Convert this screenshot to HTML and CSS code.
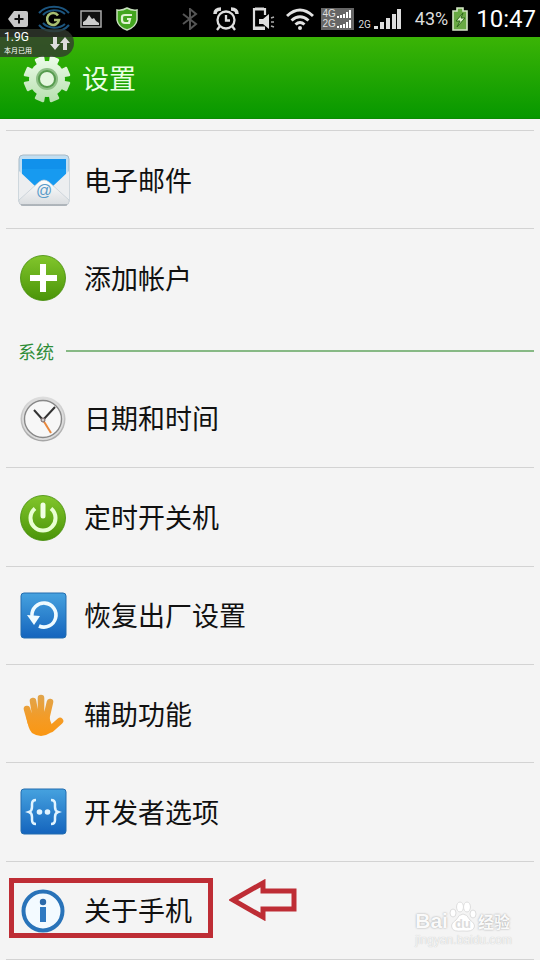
FILE: index.html
```html
<!DOCTYPE html>
<html lang="zh-CN">
<head>
    <meta charset="UTF-8">
    <meta name="viewport" content="width=device-width, initial-scale=1">
    <title>设置</title>
    <link rel="stylesheet" href="styles.css">
</head>
<body>
    <div class="status">
        <div class="left">
            <svg width="20" height="16" viewBox="0 0 20 16"><path d="M6 0h12q2 0 2 2v12q0 2-2 2H6L0 8z" fill="#c8c8c8"/><path d="M11 3.500v9M6.500 8h9" stroke="#111" stroke-width="2"/></svg>
            <svg class="ring" width="34" height="32" viewBox="0 0 34 32">
                <path d="M2 10A18 14 0 0 1 32 10M6 12A14 11 0 0 1 28 11M2 22A18 14 0 0 0 32 22M6 20A14 11 0 0 0 28 21" fill="none" stroke="#1c557f" stroke-width="2"/>
                <path d="M21 12.500a6 6 0 1 0 1 4.500h-5" fill="none" stroke="#a8bf72" stroke-width="2.600"/>
            </svg>
            <svg class="pic" width="22" height="18" viewBox="0 0 22 18"><rect x="1" y="1" width="20" height="16" fill="#111" stroke="#aaa" stroke-width="1.500"/><path d="M3 15v-3l3-2 3-5 3 4 2-1 2 3 3 2v2z" fill="#ccc"/></svg>
            <svg width="22" height="24" viewBox="0 0 22 24"><path d="M11 1q5 3 10 2v10q-1 7-10 10Q2 20 1 13V3q5 1 10-2z" fill="#43a51f" stroke="#c7e0bd" stroke-width="1.500"/><path d="M16 8H9q-3 0-3 2v3q0 3 3 3h4l1-4h-3" fill="none" stroke="#e0f2d2" stroke-width="2.200"/></svg>
        </div>
        <div class="right">
            <svg width="16" height="22" viewBox="0 0 16 22"><path d="M1 6l13 10-6 5V1l6 5L1 16" fill="none" stroke="#555" stroke-width="2"/></svg>
            <svg class="alarm" width="26" height="24" viewBox="0 0 26 24"><g fill="none" stroke="#ddd" stroke-width="2.300"><circle cx="13" cy="13" r="8.500"/><path d="M13 8v5.500h4M7 19l-3 4M19 19l3 4"/><path d="M2 7q0-5 6-5M24 7q0-5-6-5" stroke-width="3.500"/></g></svg>
            <svg class="mute" width="23" height="24" viewBox="0 0 23 24"><path d="M13 22H2V2h11v6" fill="none" stroke="#ddd" stroke-width="2.200"/><path d="M3 2h9M1 21h12" stroke="#ddd" stroke-width="3"/><path d="M7 12h4l6-5v15l-6-5H7z" fill="#ddd"/><path d="M19 11l3-1M19 15h3M19 19l3 1" stroke="#aaa" stroke-width="1.500"/></svg>
            <svg class="wifi" width="28" height="22" viewBox="0 0 28 22"><g fill="none" stroke="#e2e2e2" stroke-width="3"><path d="M1 8q13-12 26 0M5.500 12.500q8.500-7.500 17 0M9.500 16.500q4.500-4 9 0"/></g><circle cx="14" cy="20" r="2" fill="#e2e2e2"/></svg>
            <div class="sims">
                <span>4G<svg width="15" height="8" viewBox="0 0 15 8"><path d="M0 6h2v2H0zM3 5h2v3H3zM6 4h2v4H6zM9 2h2v6H9zM12 0h2v8h-2z" fill="#fff"/></svg></span>
                <span>2G<svg width="15" height="8" viewBox="0 0 15 8"><path d="M0 6h2v2H0zM3 5h2v3H3zM6 4h2v4H6zM9 2h2v6H9zM12 0h2v8h-2z" fill="#fff"/></svg></span>
            </div>
            <span class="net">2G</span>
            <svg width="27" height="20" viewBox="0 0 27 20"><path d="M0 17h4v3H0zM6 13h4v7H6zM12 9h4v11h-4zM18 5h4v15h-4zM23 0h4v20h-4z" fill="#ddd"/></svg>
            <span class="percent">43%</span>
            <svg width="16" height="24" viewBox="0 0 16 24"><path d="M1 4h4V1h6v3h4v19H1z" fill="#69a944" stroke="#d5e8c6" stroke-width="1.600"/><path d="M11 6l-7 8h4l-3 6 8-9H9z" fill="#dcf1ca" stroke="#2d6819"/></svg>
            <span class="time">10:47</span>
        </div>
        <div class="traffic">
            <div><b>1.9G</b><small>本月已用</small></div>
            <svg width="20" height="15" viewBox="0 0 20 15"><path d="M3 1h4v7h3l-5 6-5-6h3zM13 14V7h-3l5-6 5 6h-3v7z" fill="#ddd"/></svg>
        </div>
    </div>

    <header>
        <svg width="48" height="48" viewBox="0 0 48 48">
            <defs>
                <linearGradient id="gear" gradientUnits="userSpaceOnUse" x1="0" y1="0" x2="0" y2="48"><stop stop-color="#effdec"/><stop offset="1" stop-color="#b5dfad"/></linearGradient>
            </defs>
            <path d="M21 8L20 2l-7 3 3 6-5 5-6-3-3 7 6 1v6l-6 1 3 7 6-3 5 5-3 6 7 3 1-6h6l1 6 7-3-3-6 5-5 6 3 3-7-6-1v-6l6-1-3-7-6 3-5-5 3-6-7-3-1 6z" fill="url(#gear)" stroke="url(#gear)" stroke-width="2.500" stroke-linejoin="round"/>
            <circle cx="24" cy="24" r="18" fill="url(#gear)"/>
            <circle cx="24" cy="24" r="11" fill="#8dbf85"/>
            <circle cx="24" cy="24" r="9" fill="#569b4e"/>
            <circle cx="24" cy="24" r="7" fill="#e5f7df"/>
        </svg>
        <h1>设置</h1>
    </header>

    <main>
        <a class="row" href="#">
            <svg class="icon" viewBox="0 0 52 52">
                <defs>
                    <linearGradient id="paper" x2="0" y2="1"><stop stop-color="#fff"/><stop offset="1" stop-color="#d9dcdf"/></linearGradient>
                </defs>
                <rect x="1" y="1" width="50" height="50" rx="4" fill="#c0def2" stroke="#a9bac6"/>
                <path d="M4 5h44v20L26 40 4 25z" fill="#179af0"/>
                <path d="M4 5h44v10H4z" fill="#1191eb"/>
                <path d="M1 17l16 15L1 46zM51 17L35 32l16 14z" fill="#eceef0"/>
                <path d="M1 46l20-18q5-4 10 0l20 18v2q0 3-4 3H5q-4 0-4-3z" fill="url(#paper)" stroke="#c5cdd3" stroke-width=".7"/>
                <path d="M3 51h46" stroke="#8d949a"/>
                <text x="26" y="42" text-anchor="middle" class="at">@</text>
            </svg>
            <span>电子邮件</span>
        </a>
        <a class="row" href="#">
            <svg class="icon" viewBox="0 0 52 52">
                <defs>
                    <linearGradient id="green" x2="0" y2="1"><stop stop-color="#82c62c"/><stop offset="1" stop-color="#4a9408"/></linearGradient>
                </defs>
                <circle cx="25" cy="26" r="22.500" fill="url(#green)" stroke="#438b08" stroke-width=".8"/>
                <path d="M25 12v28M12 26h27" stroke="#fff" stroke-width="6"/>
            </svg>
            <span>添加帐户</span>
        </a>

        <h2>系统</h2>

        <a class="row" href="#">
            <svg class="icon" viewBox="0 0 52 52">
                <defs>
                    <linearGradient id="metal" x2="0" y2="1"><stop stop-color="#dedede"/><stop offset="1" stop-color="#a5a5a5"/></linearGradient>
                </defs>
                <circle cx="25" cy="27" r="22.500" fill="url(#metal)"/>
                <circle cx="25" cy="27" r="21" fill="#dcdcdc"/>
                <circle cx="25" cy="27" r="18.500" fill="#f7f7f7" stroke="#888" stroke-width="1.400"/>
                <path d="M25 28l8 13" stroke="#e8873c" stroke-width="2"/>
                <path d="M25 28l-9-10M25 28l12-13" stroke="#333" stroke-width="2"/>
                <circle cx="25" cy="28" r="2" fill="#ccc" stroke="#766"/>
            </svg>
            <span>日期和时间</span>
        </a>
        <a class="row" href="#">
            <svg class="icon" viewBox="0 0 52 52">
                <circle cx="25" cy="27" r="22.500" fill="url(#green)" stroke="#438b08" stroke-width=".8"/>
                <path d="M17 17.500a12.500 12.500 0 1 0 16 0" fill="none" stroke="#e9ffd3" stroke-width="4"/>
                <path d="M25 14v11" stroke="#f1ffe4" stroke-width="5" stroke-linecap="round"/>
            </svg>
            <span>定时开关机</span>
        </a>
        <a class="row" href="#">
            <svg class="icon" viewBox="0 0 52 52">
                <defs>
                    <linearGradient id="blue" x2="0" y2="1"><stop stop-color="#46a2df"/><stop offset="1" stop-color="#1464bd"/></linearGradient>
                </defs>
                <rect x="3" y="4" width="45" height="45" rx="3" fill="url(#blue)" stroke="#236daf"/>
                <path d="M14 27a12 12 0 1 1 7 10" fill="none" stroke="#effbff" stroke-width="3.600"/>
                <path d="M9 26l13 1-6 9z" fill="#effbff"/>
            </svg>
            <span>恢复出厂设置</span>
        </a>
        <a class="row" href="#">
            <svg class="icon" viewBox="0 0 52 52">
                <defs>
                    <linearGradient id="hand" gradientUnits="userSpaceOnUse" x1="0" y1="6" x2="0" y2="47"><stop stop-color="#dfa54e"/><stop offset=".6" stop-color="#f49b25"/><stop offset="1" stop-color="#fa9713"/></linearGradient>
                </defs>
                <path d="M9 21l4 14M15 13l3 18M23 10v20M32 14l-4 17M42 33l-9 8" fill="none" stroke="url(#hand)" stroke-width="6.600" stroke-linecap="round"/>
                <path d="M8 27h23q1 6 3 10l7-4q-4 8-9 12-9 6-18 0-4-4-6-18z" fill="url(#hand)"/>
            </svg>
            <span>辅助功能</span>
        </a>
        <a class="row" href="#">
            <svg class="icon" viewBox="0 0 52 52">
                <rect x="3" y="3" width="45" height="45" rx="3" fill="url(#blue)" stroke="#236daf"/>
                <path d="M18 14q-4 0-4 4v3q0 4-3 5 3 1 3 5v3q0 4 4 4M33 14q4 0 4 4v3q0 4 3 5-3 1-3 5v3q0 4-4 4" fill="none" stroke="#e1f4ff" stroke-width="2.500"/>
                <circle cx="21.500" cy="26" r="2.800" fill="#e1f4ff"/><circle cx="29.500" cy="26" r="2.800" fill="#e1f4ff"/>
            </svg>
            <span>开发者选项</span>
        </a>
        <a class="row about" href="#">
            <svg class="icon" viewBox="0 0 52 52">
                <circle cx="25" cy="27" r="19.500" fill="#f3faff" stroke="#2973b9" stroke-width="4"/>
                <circle cx="25" cy="18" r="3.200" fill="#2b69aa"/>
                <path d="M25 23v15" stroke="#2f79c1" stroke-width="6"/>
            </svg>
            <span>关于手机</span>
            <div class="mark"></div>
            <svg class="arrow" width="69" height="42" viewBox="0 0 69 42"><path d="M4 21L34 4v8h31v18H34v8z" fill="none" stroke="#be2d35" stroke-width="5"/></svg>
        </a>
    </main>

    <div class="logo">
        <div class="brand">
            <span>Bai</span>
            <svg width="28" height="32" viewBox="0 0 28 32"><g fill="#fff" stroke="#dedede"><ellipse cx="4" cy="12" rx="3" ry="4"/><ellipse cx="11" cy="6" rx="3.500" ry="5"/><ellipse cx="18" cy="6" rx="3.500" ry="5"/><ellipse cx="24" cy="13" rx="3" ry="4"/><path d="M14 13q4 0 7 6 6 4 4 8-2 4-11 3-10 1-11-3-2-4 4-8 3-6 7-6z"/></g><text x="14" y="27" text-anchor="middle" class="du">du</text></svg>
            <span class="cn">经验</span>
        </div>
        <small>jingyan.baidu.com</small>
    </div>
</body>
</html>
```
FILE: styles.css
```css
*{
    margin: 0;
    padding: 0;
    box-sizing: border-box;
}
body{
    position: relative;
    display: flex;
    flex-direction: column;
    min-height: 100vh;
    background: #f4f4f4;
    font-family: Roboto, "Noto Sans CJK SC", sans-serif;
    overflow-x: hidden;
}
svg{
    display: block;
    flex-shrink: 0;
}

/* 状态栏 */
.status{
    position: relative;
    display: flex;
    justify-content: space-between;
    height: 37px;
    padding: 0 4px 0 8px;
    background: #000;
    color: #ddd;
}
.left,
.right{
    display: flex;
    align-items: center;
}
.ring{
    margin-left: 9px;
}
.pic{
    margin: 0 14px 0 9px;
}
.alarm{
    margin-left: 15px;
}
.mute{
    margin-left: 13px;
}
.wifi{
    margin: 0 7px 0 11px;
}
.sims{
    width: 33px;
    padding: 1px;
    background: #666;
    font: 10px/10px "Liberation Sans", sans-serif;
}
.sims span{
    display: flex;
    align-items: center;
    gap: 1px;
}
.net{
    margin: 12px 3px 0 4px;
    font-size: 10px;
    line-height: 12px;
}
.percent{
    margin: 0 4px 0 14px;
    font-size: 18px;
}
.time{
    margin-left: 8px;
    color: #fff;
    font-size: 24px;
}
.traffic{
    position: absolute;
    top: 29px;
    left: 0;
    display: flex;
    align-items: center;
    justify-content: space-between;
    width: 74px;
    height: 28px;
    padding: 0 4px;
    border-radius: 0 14px 14px 0;
    background: rgba(50, 58, 46, .8);
    color: #fff;
}
.traffic b,
.traffic small{
    display: block;
    font-weight: normal;
}
.traffic b{
    font-size: 12px;
    line-height: 16px;
}
.traffic small{
    font-size: 7px;
    line-height: 12px;
}

header{
    display: flex;
    align-items: center;
    gap: 11px;
    height: 82px;
    padding: 2px 23px 0;
    border-bottom: 1px solid #0b8c04;
    background: linear-gradient(#3bb406, #079800);
    color: #e9ffe2;
}
h1{
    padding-top: 2px;
    font-size: 27px;
    line-height: 40px;
    font-weight: normal;
}

/* 设置列表 */
main{
    flex: 1;
    display: flex;
    flex-direction: column;
    padding: 11px 6px 0;
}
.row{
    position: relative;
    flex: 1;
    display: flex;
    align-items: center;
    gap: 14px;
    min-height: 80px;
    padding-left: 12px;
    border-top: 1px solid #d3d3d3;
    color: #111;
    font-size: 27px;
    line-height: 40px;
    text-decoration: none;
}
.row span{
    padding-top: 4px;
}
.icon{
    width: 52px;
    height: 52px;
}
.at{
    fill: #5a9bc9;
    font: 16px "Liberation Sans", sans-serif;
}
h2{
    display: flex;
    align-items: center;
    gap: 12px;
    height: 43px;
    padding: 5px 0 0 12px;
    color: #2f8d38;
    font-size: 18px;
    font-weight: normal;
}
h2:after{
    content: "";
    flex: 1;
    height: 2px;
    background: #87b985;
}
h2 + .row{
    border-top: 0;
}
.about{
    border-bottom: 1px solid #d3d3d3;
}
.mark{
    position: absolute;
    top: 16px;
    left: 3px;
    width: 204px;
    height: 60px;
    border: 5px solid #be2d35;
}
.arrow{
    position: absolute;
    top: 17px;
    left: 223px;
}

/* 右下角水印 */
.logo{
    position: absolute;
    right: 28px;
    bottom: 13px;
    color: #fafafa;
    text-shadow: 0 0 2px #999;
}
.brand{
    display: flex;
    align-items: flex-end;
    gap: 1px;
    font: bold 21px/24px "Liberation Sans", sans-serif;
}
.cn{
    font: bold 16px/24px "Noto Sans CJK SC", sans-serif;
}
.logo small{
    display: block;
    color: #f4f4f4;
    font: 12px/14px "Liberation Sans", sans-serif;
    text-shadow: 0 0 1px #bbb;
}
.du{
    fill: #ddd;
    font: bold 13px "Liberation Sans", sans-serif;
    text-shadow: none;
}
```
